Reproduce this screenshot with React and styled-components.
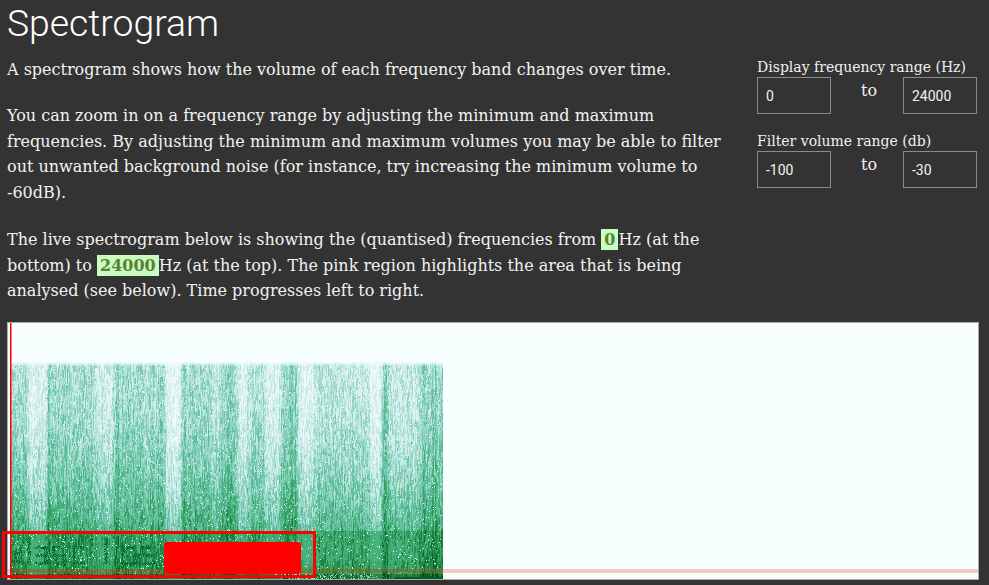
import React, { useEffect, useRef } from "react";
import styled, { createGlobalStyle } from "styled-components";

const Global = createGlobalStyle`
  html, body { margin: 0; padding: 0; background: #333; height: 100%; overflow: hidden; }
`;

const Page = styled.main`
  padding: 0 10px 0 7px;
  color: #f2f2f2;
  font-family: "DejaVu Serif", serif;
  font-size: 16px;
  line-height: 25.6px;
`;

const Title = styled.h1`
  margin: 0;
  height: 44px;
  font-family: Roboto, sans-serif;
  font-weight: 300;
  font-size: 37.3px;
  line-height: 46px;
  color: #fff;
`;

const Intro = styled.section`
  display: flex;
  justify-content: space-between;
  height: 278px;
  padding-top: 13px;
  padding-right: 2px;
  box-sizing: border-box;
`;

const Copy = styled.div`
  width: 730px;
`;

const Para = styled.p`
  margin: 0 0 20.6px;
`;

const LivePara = styled(Para)`
  padding-top: 0.8px;
`;

const Value = styled.span`
  padding: 1px 3px;
  background: #c9fcc0;
  color: #5c7f33;
  font-weight: 700;
`;

const Controls = styled.aside`
  width: 220px;
  display: flex;
  flex-direction: column;
  gap: 20px;
  margin-top: 3px;
`;

const Group = styled.div`
  display: flex;
  flex-direction: column;
`;

const GroupLabel = styled.label`
  font-size: 14px;
  line-height: 14px;
  margin-bottom: 3px;
  color: #f0f0f0;
`;

const RangeRow = styled.div`
  display: flex;
  justify-content: space-between;
`;

const To = styled.span`
  line-height: 28px;
  padding-left: 4px;
`;

const Field = styled.input`
  width: 74px;
  height: 37px;
  box-sizing: border-box;
  padding: 0 8px;
  border: 1px solid #8a8a8a;
  border-radius: 0;
  background: transparent;
  color: #f2f2f2;
  font-family: Roboto, sans-serif;
  font-size: 14px;
  outline: none;
`;

const Plot = styled.div`
  position: relative;
  width: 972px;
  height: 258px;
  box-sizing: border-box;
  border: 1px solid #aaa;
  background: #f7fffe;
`;

const PlotCanvas = styled.canvas`
  display: block;
`;

const Frame = styled.div`
  position: absolute;
  left: -6px;
  top: 208px;
  width: 314px;
  height: 47px;
  box-sizing: border-box;
  border: 3px solid #f00;
`;

const Block = styled.div`
  position: absolute;
  left: 156px;
  top: 219px;
  width: 137px;
  height: 32px;
  border-radius: 3px;
  background: #f00;
`;

const ramp = [
  [247, 252, 253], [229, 245, 249], [204, 236, 230], [153, 216, 201], [102, 194, 164],
  [65, 174, 118], [35, 139, 69], [0, 109, 44], [0, 68, 27],
];

function colour(v) {
  const t = Math.max(0, Math.min(0.9999, v)) * (ramp.length - 1);
  const i = Math.floor(t);
  const f = t - i;
  return ramp[i].map((c, k) => c + (ramp[i + 1][k] - c) * f);
}

function rng(seed) {
  let s = seed;
  return () => {
    s = (s * 1664525 + 1013904223) >>> 0;
    return s / 4294967296;
  };
}

const bands = [
  [11, 28, 0.8], [28, 38, 0.25], [38, 47, 0.32], [47, 50, 1.05], [50, 95, 0.82], [95, 114, 0.45],
  [114, 118, 1.05], [118, 145, 0.86], [145, 150, 0.6], [150, 166, 0.85], [166, 181, 0.12],
  [181, 185, 1.05], [185, 212, 0.82], [212, 220, 0.6], [220, 238, 0.9], [238, 248, 0.25],
  [248, 265, 0.75], [265, 281, 0.3], [281, 298, 1], [298, 315, 0.25], [315, 345, 0.65],
  [345, 350, 0.5], [350, 370, 0.62], [370, 382, 0.1], [382, 388, 1.1], [388, 420, 0.55],
  [420, 443, 0.88],
];

const strokes = [
  [12, 552, 9, 3], [12, 560, 9, 3], [19, 544, 3, 20],
  [27, 537, 3, 28], [35, 546, 12, 3], [35, 554, 12, 3], [35, 562, 12, 3], [44, 546, 3, 18],
  [52, 546, 12, 3], [52, 554, 12, 3], [52, 562, 12, 3], [52, 546, 3, 10], [62, 554, 3, 10],
  [72, 546, 12, 3], [72, 562, 12, 3], [72, 546, 3, 18],
  [104, 538, 3, 26], [121, 546, 3, 18], [132, 546, 3, 18], [121, 546, 14, 3], [121, 562, 14, 3],
  [141, 546, 13, 3], [141, 554, 13, 3], [141, 562, 13, 3], [141, 546, 3, 10], [152, 554, 3, 10],
];

function paint(ctx, w, h) {
  const rand = rng(20240611);
  const img = ctx.createImageData(w, h);
  const put = (x, y, c) => {
    const p = (y * w + x) * 4;
    img.data[p] = c[0];
    img.data[p + 1] = c[1];
    img.data[p + 2] = c[2];
    img.data[p + 3] = 255;
  };
  for (let y = 0; y < h; y++) for (let x = 0; x < w; x++) put(x, y, [247, 255, 254]);

  const left = 3;
  const right = 435;
  const top = 39;
  const strength = [];
  for (let sx = 11; sx < 443; sx++) {
    const band = bands.find((b) => sx >= b[0] && sx < b[1]);
    strength.push(band[2]);
  }
  const soft = strength.map((_, i) => {
    let sum = 0;
    let n = 0;
    for (let k = -2; k <= 2; k++) {
      const j = i + k;
      if (j >= 0 && j < strength.length) {
        sum += strength[j];
        n++;
      }
    }
    return sum / n + (rand() - 0.5) * 0.22;
  });
  for (let x = left; x < right; x++) {
    const s = soft[x - left];
    let streak = rand();
    for (let y = top; y < h; y++) {
      if (rand() < 0.3) streak = rand();
      const depth = Math.min(1, (y - top) / (208 - top));
      const lo = 0.07 + 0.34 * depth * depth;
      const hi = 0.4 + 0.27 * depth * depth;
      let v = lo + (hi - lo) * Math.min(1, s) + (streak - 0.5) * 0.26;
      if (s > 0.95) v += 0.03;
      if (y < top + 4) v *= 0.3 + 0.18 * (y - top);
      if (y < top + 1 && rand() < 0.5) v = 0.02;
      if (y >= 208) v = Math.max(v, 0.52) + 0.08;
      if (y >= 238) v += 0.03;
      if (y >= 251) v += 0.12;
      if (y >= 251 && x > 260 && x < 370 && rand() < 0.25) v = 0.35;
      if (y >= 254 && x > 385) v = 0.92;
      if (rand() < 0.022 && y < 251) v = 0.04 + rand() * 0.14;
      put(x, y, colour(v));
    }
  }
  strokes.forEach(([sx, sy, sw, sh]) => {
    for (let x = sx - 8; x < sx - 8 + sw; x++) {
      for (let y = sy - 323; y < sy - 323 + sh; y++) {
        if (rand() < 0.75) put(x + Math.floor(rand() * 2), y, colour(0.76 + rand() * 0.18));
      }
    }
  });
  for (let y = 246; y < 250; y++) {
    for (let x = 0; x < w; x++) {
      const p = (y * w + x) * 4;
      if (x >= left && x < right) {
        img.data[p] = img.data[p] * 0.5 + 75;
        img.data[p + 1] = img.data[p + 1] * 0.6 + 28;
        img.data[p + 2] = img.data[p + 2] * 0.45 + 18;
      } else {
        img.data[p] = 247;
        img.data[p + 1] = 198;
        img.data[p + 2] = 198;
      }
    }
  }
  ctx.putImageData(img, 0, 0);
  ctx.fillStyle = "#f00";
  ctx.fillRect(2, 0, 1.5, h);
}

function Spectrogram() {
  const ref = useRef(null);
  useEffect(() => {
    const c = ref.current;
    paint(c.getContext("2d"), c.width, c.height);
  }, []);
  return <PlotCanvas ref={ref} width={970} height={256} />;
}

function Range({ label, from, to }) {
  return (
    <Group>
      <GroupLabel>{label}</GroupLabel>
      <RangeRow>
        <Field defaultValue={from} />
        <To>to</To>
        <Field defaultValue={to} />
      </RangeRow>
    </Group>
  );
}

export default function App() {
  return (
    <Page>
      <Global />
      <Title>Spectrogram</Title>
      <Intro>
        <Copy>
          <Para>A spectrogram shows how the volume of each frequency band changes over time.</Para>
          <Para>
            You can zoom in on a frequency range by adjusting the minimum and maximum frequencies. By
            adjusting the minimum and maximum volumes you may be able to filter out unwanted background
            noise (for instance, try increasing the minimum volume to -60dB).
          </Para>
          <LivePara>
            The live spectrogram below is showing the (quantised) frequencies from <Value>0</Value>Hz (at the
            bottom) to <Value>24000</Value>Hz (at the top). The pink region highlights the area that is being
            analysed (see below). Time progresses left to right.
          </LivePara>
        </Copy>
        <Controls>
          <Range label="Display frequency range (Hz)" from="0" to="24000" />
          <Range label="Filter volume range (db)" from="-100" to="-30" />
        </Controls>
      </Intro>
      <Plot>
        <Spectrogram />
        <Frame />
        <Block />
      </Plot>
    </Page>
  );
}
